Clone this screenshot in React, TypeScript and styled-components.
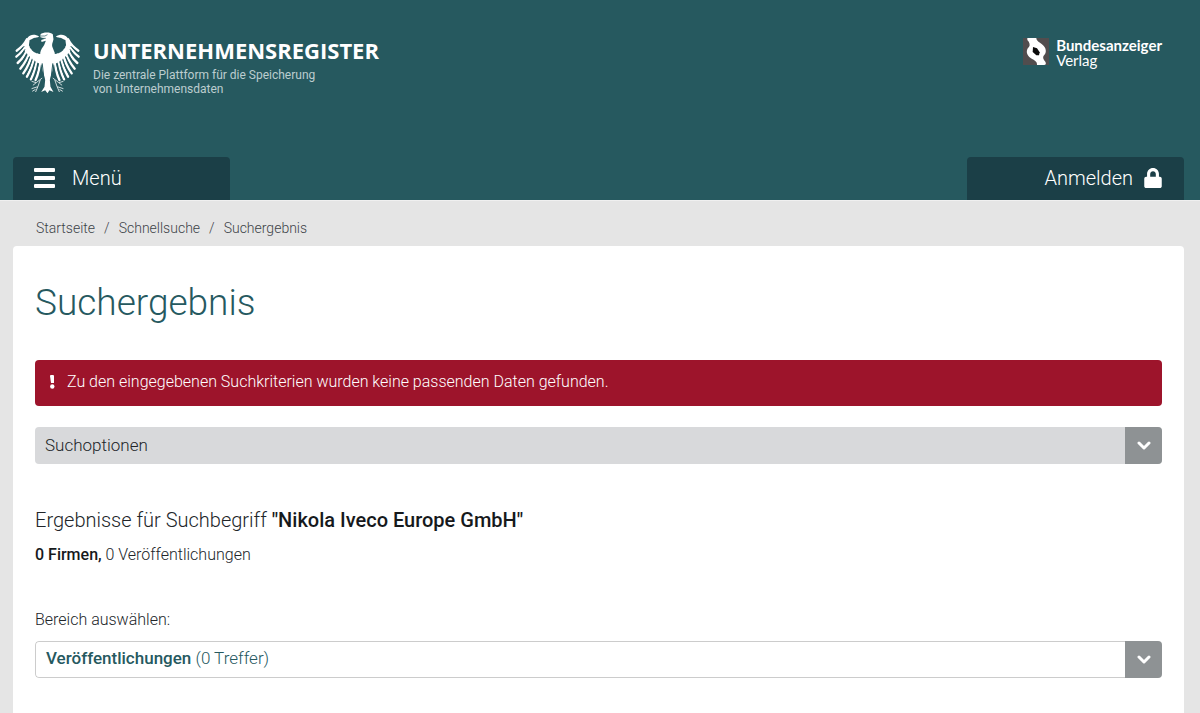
import React, { useState } from "react";
import styled, { createGlobalStyle } from "styled-components";

const GlobalStyle = createGlobalStyle`
  *, *::before, *::after { box-sizing: border-box; }
  body {
    margin: 0;
    background: #e5e5e5;
    color: #212529;
    font-family: Roboto, "Liberation Sans", sans-serif;
    font-size: 16px;
    font-weight: 300;
    line-height: 24px;
  }
  button, select { font: inherit; color: inherit; }
`;

const Header = styled.header`
  display: flex;
  flex-direction: column;
  justify-content: space-between;
  min-height: 201px;
  padding: 0 16px 0 13px;
  background: #26595f;
  border-bottom: 1px solid #f0f0f0;
  color: #fff;
`;

const BrandRow = styled.div`
  display: flex;
  justify-content: space-between;
  align-items: flex-start;
  padding: 32px 22px 0 1px;
`;

const Brand = styled.a`
  display: flex;
  gap: 12px;
  color: inherit;
  text-decoration: none;
`;

const BrandName = styled.div`
  padding-top: 4px;
  font-family: "Open Sans", "Noto Sans", sans-serif;
  font-size: 22px;
  font-weight: 700;
  line-height: 28px;
`;

const Claim = styled.p`
  margin: 4px 0 0;
  color: #bccdcf;
  font-size: 12px;
  font-weight: 400;
  line-height: 14px;
`;

const Publisher = styled.a`
  display: flex;
  gap: 7px;
  padding-top: 6px;
  color: inherit;
  font-family: Lato, "Open Sans", sans-serif;
  font-size: 15px;
  font-weight: 400;
  line-height: 15px;
  text-decoration: none;
`;

const PublisherName = styled.span`
  display: flex;
  flex-direction: column;
  strong { font-weight: 700; }
`;

const TabRow = styled.nav`
  display: flex;
  justify-content: space-between;
`;

const Tab = styled.button<{ $end?: boolean }>`
  display: flex;
  align-items: center;
  justify-content: ${(p) => (p.$end ? "flex-end" : "flex-start")};
  gap: ${(p) => (p.$end ? 11 : 17)}px;
  width: 217px;
  height: 43px;
  padding: 0 22px 1px 21px;
  border: 0;
  border-radius: 4px 4px 0 0;
  background: #1b3f47;
  color: #fff;
  font-size: 20px;
  cursor: pointer;
`;

const Breadcrumb = styled.ol`
  display: flex;
  margin: 0;
  padding: 17px 36px 8px;
  list-style: none;
  color: #3d4348;
  font-size: 14px;
  line-height: 20px;
  li + li::before { content: "/"; padding: 0 9px; }
  a { color: inherit; text-decoration: none; }
`;

const Panel = styled.main`
  margin: 0 16px 0 13px;
  padding: 33px 22px 36px;
  min-height: calc(100vh - 246px);
  border-radius: 4px 4px 0 0;
  background: #fff;
`;

const Title = styled.h1`
  margin: 0 0 33px;
  color: #26595f;
  font-size: 37px;
  font-weight: 300;
  line-height: 48px;
`;

const Alert = styled.div`
  display: flex;
  align-items: center;
  gap: 11px;
  min-height: 46px;
  margin-bottom: 21px;
  padding: 0 14px 2px;
  border-radius: 4px;
  background: #9d142b;
  color: #fff;
`;

const Accordion = styled.button`
  display: flex;
  align-items: stretch;
  justify-content: space-between;
  width: 100%;
  height: 37px;
  padding: 0;
  border: 0;
  border-radius: 4px;
  overflow: hidden;
  background: #d8d9db;
  font-size: 17px;
  text-align: left;
  cursor: pointer;
`;

const BarLabel = styled.span`
  flex: 1;
  padding: 6px 10px;
`;

const Toggle = styled.span`
  display: grid;
  place-items: center;
  width: 37px;
  background: #8e9294;
  color: #fff;
`;

const ResultHeading = styled.h2`
  margin: 42px 0 9px;
  font-size: 20px;
  font-weight: 300;
  line-height: 28px;
  strong { font-weight: 500; color: #16191c; }
`;

const Counts = styled.p`
  margin: 0 0 41px;
  strong { font-weight: 500; color: #16191c; }
`;

const FieldLabel = styled.label`
  display: block;
  margin-bottom: 9px;
`;

const SelectBox = styled.div`
  position: relative;
  display: flex;
  height: 37px;
  border-radius: 4px;
  overflow: hidden;
  &:focus-within { outline: 2px solid #26595f; }
`;

const SelectValue = styled.div`
  flex: 1;
  padding: 4px 10px;
  border: 1px solid #ccc;
  border-right: 0;
  border-radius: 4px 0 0 4px;
  color: #26595f;
  font-size: 17px;
  strong { font-weight: 500; }
`;

const NativeSelect = styled.select`
  position: absolute;
  inset: 0;
  width: 100%;
  height: 100%;
  opacity: 0;
  cursor: pointer;
`;

const Wing = () => (
  <g>
    <path d="M117 50C106 42 90 42 83 52C76 62 72 70 68 78L72 92L84 106L98 118L114 130L130 136L130 100C112 106 92 96 86 76L88 60Z" />
    <g fill="none" stroke="#fff" strokeWidth="7" strokeLinecap="round">
      <path d="M80 58Q70 78 49 92M80 66Q72 92 48 110M84 80Q76 108 52 129M90 90Q82 120 60 146M96 98Q88 134 69 160M104 102Q96 142 80 170M112 104Q106 150 92 178M122 106Q118 156 106 180" />
    </g>
    <g fill="none" stroke="#26595f" strokeWidth="3">
      <path d="M50 101Q64 91 72 78M51 119Q66 104 74 88M57 137Q71 120 79 101M66 153Q79 134 87 111M76 165Q89 145 96 119M88 174Q99 152 105 125M99 180Q110 158 115 130" />
    </g>
    <path d="M112 54C100 51 91 58 90 70C90 86 103 93 124 91L130 80C127 66 120 60 118 54Z" fill="#26595f" />
    <path d="M126 174L108 188M120 180L113 200L106 216M108 188L94 184M108 188L98 196M113 200L94 206M106 208L96 214" fill="none" stroke="#d0dcdd" strokeWidth="3" />
  </g>
);

const Eagle = () => (
  <svg width="67" height="62" viewBox="41 36 202 186" preserveAspectRatio="none" fill="#fff" aria-hidden="true">
    <Wing />
    <g transform="translate(284 0) scale(-1 1)">
      <Wing />
    </g>
    <path d="M121 43C127 37 150 35 158 43L160 58C158 68 153 75 158 84L164 99L158 148L149 180L151 200L160 216L148 211L142 220L135 211L123 216L133 200L135 180L126 148L120 99C121 89 128 82 132 75L137 62L124 66L123 60L135 56L121 52Z" />
    <path d="M122 48L134 48L142 44M124 55L137 55" fill="none" stroke="#26595f" strokeWidth="2" />
    <path d="M126 130L132 182M158 130L152 182" stroke="#26595f" strokeWidth="3" />
  </svg>
);

const PublisherMark = () => (
  <svg width="26" height="27" viewBox="0 0 78 81" aria-hidden="true">
    <path fill="#514d4e" d="M0 0H78V81H0Z" />
    <path fill="#fff" d="M13 0H40C40 8 48 12 56 18C71 29 72 45 62 53C58 58 62 65 67 71C70 76 69 81 63 81H42C43 70 33 67 24 61C9 51 8 35 18 27C22 22 20 13 13 6Z" />
    <path fill="#0b0b0b" d="M30 27L42 31L50 43L48 52L40 52L29 42Z" />
  </svg>
);

const MenuIcon = () => (
  <svg width="21" height="20" viewBox="0 0 21 20" fill="#fff" aria-hidden="true">
    <rect width="21" height="4" rx="1" />
    <rect y="8" width="21" height="4" rx="1" />
    <rect y="16" width="21" height="4" rx="1" />
  </svg>
);

const LockIcon = () => (
  <svg width="18" height="20" viewBox="0 0 448 512" fill="#fff" aria-hidden="true">
    <path d="M400 224h-24v-72C376 68.200 307.800 0 224 0S72 68.200 72 152v72H48c-26.500 0-48 21.500-48 48v192c0 26.500 21.500 48 48 48h352c26.500 0 48-21.500 48-48V272c0-26.500-21.500-48-48-48zm-104 0H152v-72c0-39.700 32.300-72 72-72s72 32.300 72 72v72z" />
  </svg>
);

const Exclamation = () => (
  <svg width="7" height="14" viewBox="0 0 7 14" fill="#fff" aria-hidden="true">
    <path d="M1 1Q1 0 2 0H4Q5 0 5 1L5 8H2Z" />
    <circle cx="3.300" cy="11.500" r="2.200" />
  </svg>
);

const Chevron = () => (
  <svg width="14" height="9" viewBox="0 0 14 9" fill="none" stroke="#fff" strokeWidth="3" strokeLinecap="round" strokeLinejoin="round" aria-hidden="true">
    <path d="M2 2L7 7L12 2" />
  </svg>
);

export default function App() {
  const [open, setOpen] = useState(false);
  return (
    <>
      <GlobalStyle />
      <Header>
        <BrandRow>
          <Brand href="#start">
            <Eagle />
            <div>
              <BrandName>UNTERNEHMENSREGISTER</BrandName>
              <Claim>
                Die zentrale Plattform für die Speicherung
                <br />
                von Unternehmensdaten
              </Claim>
            </div>
          </Brand>
          <Publisher href="#verlag">
            <PublisherMark />
            <PublisherName>
              <strong>Bundesanzeiger</strong>
              <span>Verlag</span>
            </PublisherName>
          </Publisher>
        </BrandRow>
        <TabRow>
          <Tab type="button">
            <MenuIcon />
            Menü
          </Tab>
          <Tab type="button" $end>
            Anmelden
            <LockIcon />
          </Tab>
        </TabRow>
      </Header>
      <nav aria-label="Breadcrumb">
        <Breadcrumb>
          <li><a href="#start">Startseite</a></li>
          <li><a href="#suche">Schnellsuche</a></li>
          <li>Suchergebnis</li>
        </Breadcrumb>
      </nav>
      <Panel>
        <Title>Suchergebnis</Title>
        <Alert role="alert">
          <Exclamation />
          <span>Zu den eingegebenen Suchkriterien wurden keine passenden Daten gefunden.</span>
        </Alert>
        <Accordion type="button" aria-expanded={open} onClick={() => setOpen(!open)}>
          <BarLabel>Suchoptionen</BarLabel>
          <Toggle><Chevron /></Toggle>
        </Accordion>
        <ResultHeading>
          Ergebnisse für Suchbegriff <strong>"Nikola Iveco Europe GmbH"</strong>
        </ResultHeading>
        <Counts>
          <strong>0 Firmen,</strong> 0 Veröffentlichungen
        </Counts>
        <FieldLabel htmlFor="area">Bereich auswählen:</FieldLabel>
        <SelectBox>
          <SelectValue aria-hidden="true">
            <strong>Veröffentlichungen</strong> (0 Treffer)
          </SelectValue>
          <Toggle><Chevron /></Toggle>
          <NativeSelect id="area">
            <option>Veröffentlichungen (0 Treffer)</option>
          </NativeSelect>
        </SelectBox>
      </Panel>
    </>
  );
}
